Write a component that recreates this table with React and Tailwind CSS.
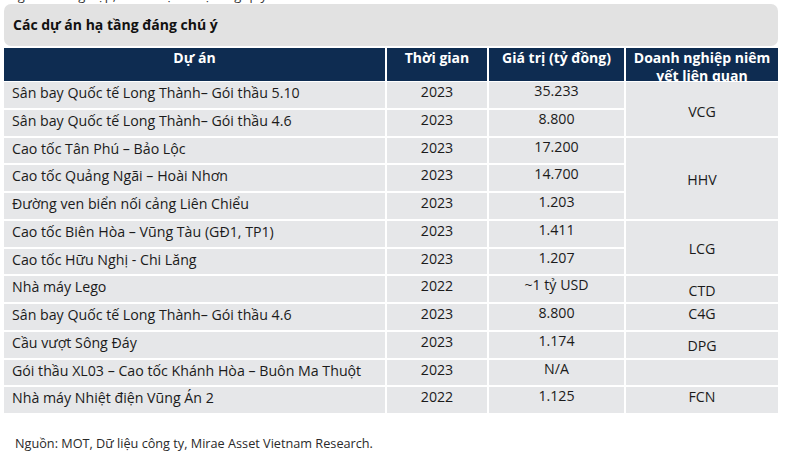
import React from "react";

const rows = [
  ["Sân bay Quốc tế Long Thành– Gói thầu 5.10", "2023", "35.233"],
  ["Sân bay Quốc tế Long Thành– Gói thầu 4.6", "2023", "8.800"],
  ["Cao tốc Tân Phú – Bảo Lộc", "2023", "17.200"],
  ["Cao tốc Quảng Ngãi – Hoài Nhơn", "2023", "14.700"],
  ["Đường ven biển nối cảng Liên Chiểu", "2023", "1.203"],
  ["Cao tốc Biên Hòa – Vũng Tàu (GĐ1, TP1)", "2023", "1.411"],
  ["Cao tốc Hữu Nghị - Chi Lăng", "2023", "1.207"],
  ["Nhà máy Lego", "2022", "~1 tỷ USD"],
  ["Sân bay Quốc tế Long Thành– Gói thầu 4.6", "2023", "8.800"],
  ["Cầu vượt Sông Đáy", "2023", "1.174"],
  ["Gói thầu XL03 – Cao tốc Khánh Hòa – Buôn Ma Thuột", "2023", "N/A"],
  ["Nhà máy Nhiệt điện Vũng Án 2", "2022", "1.125"],
];

const groups = [
  { text: "VCG", cls: "row-start-1 row-span-2 items-center pt-[6px]" },
  { text: "HHV", cls: "row-start-3 row-span-3 items-center pt-[4px]" },
  { text: "LCG", cls: "row-start-6 row-span-2 items-center pt-[3px]" },
  { text: "CTD", cls: "row-start-8 row-span-1 items-center pt-[3px]" },
  { text: "C4G", cls: "row-start-9 row-span-1 items-start leading-[14px]" },
  { text: "DPG", cls: "row-start-10 row-span-1 items-center pt-[3px]" },
  { text: "", cls: "row-start-11 row-span-1 items-center" },
  { text: "FCN", cls: "row-start-12 row-span-1 items-start leading-[18px]" },
];

export default function App() {
  return (
    <div className="w-[789px] h-[469px] bg-white overflow-hidden font-['Open_Sans',sans-serif] text-[#1b1b1b]">
      <div className="h-[4px] overflow-hidden">
        <div className="mt-[-14px] pl-[8px] text-[13px] leading-[18px] text-[#333]">
          Nguồn: Tổng hợp, nhiều dự án hạ tầng quy mô lớn
        </div>
      </div>
      <div className="ml-[4px] w-[774px] h-[41.5px] rounded-[7px] bg-[#e2e2e2] pl-[9px] pt-[11px] text-[14px] leading-[20px] font-bold text-[#111]">
        Các dự án hạ tầng đáng chú ý
      </div>
      <div className="mt-[2.5px] ml-[4px] w-[774px] h-[33px] grid grid-cols-[381px_100px_135px_152px] gap-x-[2px] bg-white overflow-hidden">
        {["Dự án", "Thời gian", "Giá trị (tỷ đồng)", "Doanh nghiệp niêm yết liên quan"].map((h, i) => (
          <div
            key={i}
            className="bg-[#0e2c51] text-white font-bold text-[14px] leading-[18px] text-center pt-[1px] px-[2px]"
          >
            {h}
          </div>
        ))}
      </div>
      <div className="mt-[1px] ml-[4px] w-[774px] grid grid-cols-[381px_100px_135px_152px] grid-rows-[repeat(12,25.75px)] gap-[2px] bg-white text-[14.2px]">
        {rows.map((r, i) => (
          <React.Fragment key={i}>
            <div
              className="bg-[#e6e7e9] pl-[8px] leading-[22px] whitespace-nowrap"
              style={{ gridRow: i + 1, gridColumn: 1 }}
            >
              {r[0]}
            </div>
            <div
              className="bg-[#e6e7e9] text-center leading-[20px]"
              style={{ gridRow: i + 1, gridColumn: 2 }}
            >
              {r[1]}
            </div>
            <div
              className="bg-[#e6e7e9] text-center leading-[18px]"
              style={{ gridRow: i + 1, gridColumn: 3 }}
            >
              {r[2]}
            </div>
          </React.Fragment>
        ))}
        {groups.map((g, i) => (
          <div
            key={"g" + i}
            className={"col-start-4 bg-[#e6e7e9] flex justify-center leading-[20px] " + g.cls}
          >
            {g.text}
          </div>
        ))}
      </div>
      <div className="mt-[21px] pl-[15px] text-[12.7px] leading-[18px] text-[#2a2a2a]">
        Nguồn: MOT, Dữ liệu công ty, Mirae Asset Vietnam Research.
      </div>
    </div>
  );
}
